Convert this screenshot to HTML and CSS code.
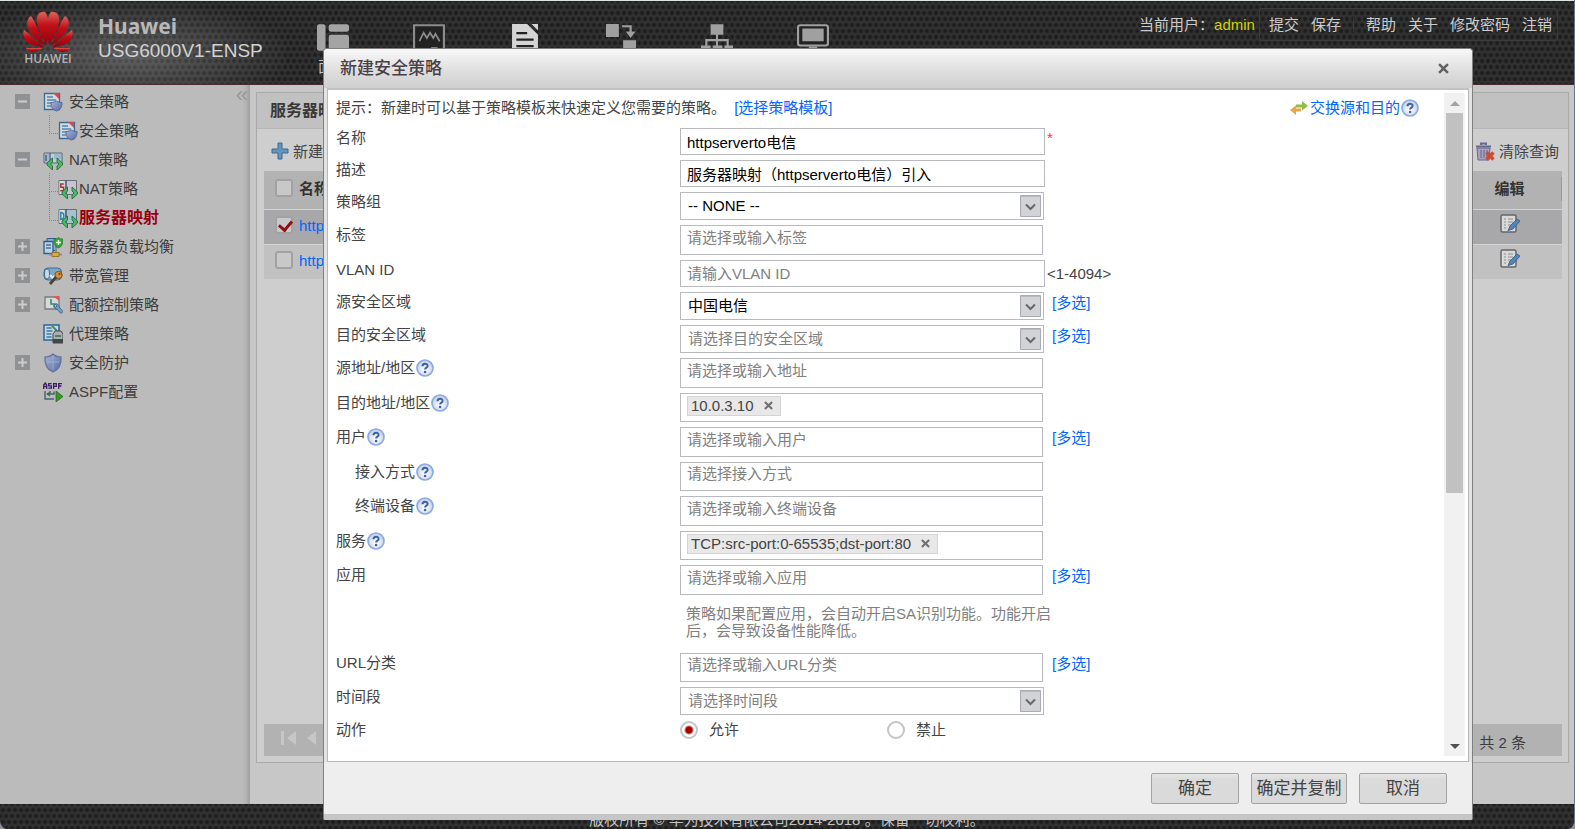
FILE: index.html
```html
<!DOCTYPE html>
<html lang="zh-CN">
<head>
<meta charset="utf-8">
<title>Huawei USG6000V1-ENSP</title>
<link rel="stylesheet" href="styles.css">
</head>
<body>
<svg class="defs" aria-hidden="true">
  <defs>
    <linearGradient id="petal" x1="0" y1="0" x2="0" y2="1"><stop offset="0" stop-color="#d9655c"/><stop offset=".4" stop-color="#c01018"/><stop offset="1" stop-color="#96000c"/></linearGradient>
    <radialGradient id="ball" cx=".5" cy=".6" r=".6"><stop offset="0" stop-color="#ffffff"/><stop offset="1" stop-color="#c3cde0"/></radialGradient>
    <linearGradient id="shieldfill" x1="0" y1="0" x2="1" y2="1"><stop offset="0" stop-color="#a9b6d6"/><stop offset="1" stop-color="#5669a6"/></linearGradient>
    <g id="petals"><path d="M26 34C24 22 23 6 28 1c6-1 9 4 8 10-1 8-6 17-10 23"/><path d="M28 35C33 25 37 11 42 5c4 2 5 8 2 14-3 6-10 12-16 16"/><path d="M29 36c7-5 15-14 20-17 2 6-1 12-6 14-5 2-9 3-14 3"/><path d="M30 37h17c-2 4-8 5-11 3z"/></g>
    <symbol id="i-help" viewBox="0 0 18 18"><circle cx="9" cy="9" r="8" fill="url(#ball)" stroke="#8aaae4" stroke-width="1.7"/><path d="M6.500 7.200C6.500 4 11.600 4 11.600 6.900c0 1.800-2.500 1.700-2.500 3.700" fill="none" stroke="#3a62a8" stroke-width="2"/><circle cx="9.100" cy="13" r="1.300" fill="#3a62a8"/></symbol>
    <symbol id="i-plus" viewBox="0 0 15 15"><path d="M0 0h15v15H0z" fill="#8f9193"/><path d="M3 7.500h9M7.500 3v9" stroke="#ccc" stroke-width="2"/></symbol>
    <symbol id="i-minus" viewBox="0 0 15 15"><path d="M0 0h15v15H0z" fill="#8f9193"/><path d="M3 7.500h9" stroke="#ccc" stroke-width="2"/></symbol>
    <symbol id="i-policy" viewBox="0 0 20 20"><path d="M1.500 1.500h15v16h-15z" fill="#d3d9de" stroke="#3f6c92" stroke-width="1.300"/><path d="M4 5h6M4 8h9M4 11h4M4 14h4" stroke="#4e86b4" stroke-width="1.300"/><path d="M10 1h6v6z" fill="#d8474c"/><path d="M8 10.500c2 0 4-.5 5.500-1.500 1.500 1 3.500 1.500 5.500 1.500 0 4-1 7-5.500 8.500C9 17.500 8 14.500 8 10.500z" fill="url(#shieldfill)" stroke="#56679b"/></symbol>
    <symbol id="i-arrows" viewBox="0 0 20 20"><path d="M9.500 8v4l-2 2 2 2v4L4 15v-2zM14 8l5.500 5v2L14 20v-4l2-2-2-2z" fill="#4fb568" stroke="#1d7039" stroke-width=".9"/></symbol>
    <symbol id="i-nat" viewBox="0 0 20 20"><path d="M1 3h18v10H1z" fill="#c4ccd2" stroke="#5b6671"/><path d="M2 4h4v8H2zM11 4h7v5h-7z" fill="#9db8cb"/><path d="M3 5v6M7 3v10" stroke="#315c7e" stroke-width="1.200"/><use href="#i-arrows"/></symbol>
    <symbol id="i-snat" viewBox="0 0 20 20"><path d="M1 1.500h17.500v14H1z" fill="#c9c3d0" stroke="#67707a"/><path d="M1.500 2h5v13h-5z" fill="#ddd"/><path d="M8 1v15" stroke="#455a6b" stroke-width="1.500"/><path d="M5.800 5H2.800v3.300h2.800v3.500H2.300" fill="none" stroke="#9e3530" stroke-width="1.400"/><use href="#i-arrows"/></symbol>
    <symbol id="i-dnat" viewBox="0 0 20 20"><path d="M1 1.500h17.500v14H1z" fill="#a9c0cf" stroke="#67707a"/><path d="M1.500 2h5v13h-5z" fill="#ddd"/><path d="M8 1v15" stroke="#455a6b" stroke-width="1.500"/><path d="M2.800 4.500v7c4 0 4-7 0-7z" fill="none" stroke="#2b81ad" stroke-width="1.400"/><use href="#i-arrows"/></symbol>
    <symbol id="i-balance" viewBox="0 0 20 20"><path d="M4 1.500h9v12H4z" fill="#8fb0cf" stroke="#2d5c8b"/><path d="M1 4.500h9v12H1z" fill="#c0d2e2" stroke="#2d5c8b" stroke-width="1.300"/><path d="M3 8h5M3 11h5" stroke="#3d74a5" stroke-width="1.300"/><path d="M11 2c2 0 3-.4 4.500-1.500C17 1.600 18 2 20 2c0 5-1 7.500-4.500 9C12 9.500 11 7 11 2z" fill="#35a535" stroke="#1a701a" stroke-width=".6"/><path d="M15.500 3v5M13 5.500h5" stroke="#e6f5e0" stroke-width="1.500"/><path d="M13 11v6M6 17.500h13" stroke="#8b8d90" stroke-width="2"/><path d="M9 15.500h7v4H9z" fill="#d7ab43" stroke="#8b671c" stroke-width=".8"/></symbol>
    <symbol id="i-band" viewBox="0 0 20 20"><rect x="1" y="2" width="17.500" height="12" rx="4" fill="#7ba6c6" stroke="#406b91"/><ellipse cx="4" cy="8" rx="2.500" ry="5" fill="#c8dce8" stroke="#406b91"/><path d="M7 9l3 3 5-7" fill="none" stroke="#e5f2f5" stroke-width="2"/><circle cx="15.500" cy="9" r="3.700" fill="#d0923c" stroke="#7b4c19"/><path d="M13 11l-6 7" stroke="#494137" stroke-width="2.800"/><circle cx="16.500" cy="8" r="1" fill="#6c4113"/></symbol>
    <symbol id="i-quota" viewBox="0 0 20 20"><path d="M2 2h14v12H2z" fill="#d6dad9" stroke="#747d7e" stroke-width="1.300"/><path d="M8 4v5h4" stroke="#34906b" stroke-width="1.600" fill="none"/><path d="M10 1h6v5z" fill="#d45d5c"/><path d="M11 9.500c-1 3 1 4.500 3 4.500l4 4.500 2-2-4-4.500c0-2-2-4-4-3l2 2-1.500 1.500z" fill="#75a3c7" stroke="#395f84" stroke-width=".9"/></symbol>
    <symbol id="i-proxy" viewBox="0 0 20 20"><path d="M1 1h15v15H1z" fill="#c8d6df" stroke="#2b679a" stroke-width="1.500"/><path d="M3.500 4h5M3.500 7h6M3.500 10h5M3.500 13h5" stroke="#3a79ac" stroke-width="1.400"/><path d="M9 2l5 5" stroke="#429353" stroke-width="2"/><path d="M10 10l2-3h6l2 3v9H10z" fill="#abb0b1" stroke="#424747"/><path d="M10 15h10v4H10z" fill="#424747"/><path d="M12 12h6" stroke="#356f4a" stroke-width="1.500"/></symbol>
    <symbol id="i-shield" viewBox="0 0 20 20"><path d="M2 4c3 0 6-1 8-3 2 2 5 3 8 3 .5 7-1 12-8 15C3 16 1.500 11 2 4z" fill="url(#shieldfill)" stroke="#64749f" stroke-width="1.300"/><path d="M10 3v14M4 9h12" stroke="#b3c0dd" opacity=".6"/></symbol>
    <symbol id="i-aspf" viewBox="0 0 20 20"><path d="M.7 7V3l1.500-2 1.500 2v4M.7 4.500h3M8.500 1.600H5.700v2.200h2.600v2.400H5.300M10.600 7V1.600h2.700v2.700h-2.700M15.700 7V1.600H19M15.700 4h2.700" fill="none" stroke="#3b1d68" stroke-width="1.300"/><path d="M2 9v8h9M4 12h7V9.500M7 9v3" fill="none" stroke="#48636d" stroke-width="1.400"/><path d="M3 12l4-2.500v5z" fill="#267f45"/><path d="M13 9v11l7-5.500z" fill="#379824" stroke="#1a6413" stroke-width=".7"/></symbol>
    <symbol id="i-edit" viewBox="0 0 20 20"><rect x="1" y="1" width="15" height="17" rx="1.500" fill="#d8d9d8" stroke="#62666b" stroke-width="1.500"/><path d="M4 5h2M8 5h5M4 8h2M8 8h5M4 11h2M8 11h3M4 14h2" stroke="#8d8f91" stroke-width="1.200"/><path d="M17 5l3 2-7 8-5 1.500 2-4.500z" fill="#4f88b8" stroke="#315b80" stroke-width=".8"/></symbol>
    <symbol id="i-down" viewBox="0 0 21 22"><path d="M.5.5h20v21H.5z" fill="#d2d3d6" stroke="#a9abb2"/><path d="M1 1.500h19" stroke="#b9bbc0"/><path d="M6 9.500l4.500 4.500L15 9.500" fill="none" stroke="#66686c" stroke-width="2"/></symbol>
    <symbol id="i-x" viewBox="0 0 10 10"><path d="M1 1l8 8M9 1L1 9" stroke="currentColor" stroke-width="2.300"/></symbol>
  </defs>
</svg>
<div class="page">
  <header class="top">
    <div class="brand">
      <div class="logo">
        <svg width="50" height="41" viewBox="0 0 50 41" aria-hidden="true"><g fill="url(#petal)"><use href="#petals"/><use href="#petals" transform="translate(50 0) scale(-1 1)"/></g></svg>
        <span class="logo-name">HUAWEI</span>
      </div>
      <div class="product"><strong>Huawei</strong><span>USG6000V1-ENSP</span></div>
    </div>
    <nav class="modules" aria-label="模块">
      <a href="#"><svg width="32" height="27" viewBox="0 0 30 25" fill="#a4a4a4" aria-hidden="true"><rect width="8" height="25" rx="2"/><rect x="11" width="19" height="7" rx="2"/><rect x="11" y="10" width="19" height="15" rx="2"/></svg><span>面板</span></a>
      <a href="#" aria-label="监控"><svg width="32" height="27" viewBox="0 0 30 25" fill="none" stroke="#8c8c8c" aria-hidden="true"><path d="M1 26V1h28v25" fill="#222" stroke-width="2"/><path d="M6 16l4-8 3 5 3-5 3 5 2-4 4 7" stroke-width="1.600"/><path d="M17 23h6" stroke-width="3"/></svg></a>
      <a href="#" aria-label="策略"><svg width="26" height="27" viewBox="0 0 24 25" fill="#d4d4d4" aria-hidden="true"><path d="M0 0h14l10 10v15H0zM18 0h6v6z"/><path d="M4 8.500h10M4 14.500h16M4 20.500h16" stroke="#222" stroke-width="2"/></svg></a>
      <a href="#" aria-label="对象"><svg width="30" height="27" viewBox="0 0 28 25" fill="#a0a0a0" aria-hidden="true"><path d="M0 0h12v12H0zM16 15h12v10H16z"/><path d="M15 2h8v8" fill="none" stroke="#a0a0a0" stroke-width="2"/><path d="M18.500 7h9L23 13z"/></svg></a>
      <a href="#" aria-label="网络"><svg width="32" height="27" viewBox="0 0 30 25" fill="#a0a0a0" aria-hidden="true"><path d="M9 0h12v10H9zM0 20h9v5H0zM11 20h9v5h-9zM22 20h8v5h-8z"/><path d="M15 9v12M5 21v-6h20v6" fill="none" stroke="#a0a0a0" stroke-width="2"/></svg></a>
      <a href="#" aria-label="系统"><svg width="32" height="27" viewBox="0 0 30 25" fill="#a0a0a0" aria-hidden="true"><rect x="1" y="1" width="28" height="19" rx="2" fill="#222" stroke="#a0a0a0" stroke-width="2"/><path d="M5 4h20v12H5zM11 21h8v4h-8z"/></svg></a>
    </nav>
    <div class="account">
      <span>当前用户：</span><span class="user">admin</span>
      <div class="links"><a href="#">提交</a><a href="#">保存</a><i></i><a href="#">帮助</a><a href="#">关于</a><a href="#">修改密码</a><a href="#">注销</a></div>
    </div>
  </header>

  <div class="body">
    <aside class="side">
      <span class="collapse">«</span>
      <ul class="tree">
        <li><button class="toggle" aria-label="收起"><svg><use href="#i-minus"/></svg></button><a href="#"><svg class="ico"><use href="#i-policy"/></svg>安全策略</a></li>
        <li class="child last"><a href="#"><svg class="ico"><use href="#i-policy"/></svg>安全策略</a></li>
        <li><button class="toggle" aria-label="收起"><svg><use href="#i-minus"/></svg></button><a href="#"><svg class="ico"><use href="#i-nat"/></svg>NAT策略</a></li>
        <li class="child"><a href="#"><svg class="ico"><use href="#i-snat"/></svg>NAT策略</a></li>
        <li class="child last current"><a href="#"><svg class="ico"><use href="#i-dnat"/></svg>服务器映射</a></li>
        <li><button class="toggle" aria-label="展开"><svg><use href="#i-plus"/></svg></button><a href="#"><svg class="ico"><use href="#i-balance"/></svg>服务器负载均衡</a></li>
        <li><button class="toggle" aria-label="展开"><svg><use href="#i-plus"/></svg></button><a href="#"><svg class="ico"><use href="#i-band"/></svg>带宽管理</a></li>
        <li><button class="toggle" aria-label="展开"><svg><use href="#i-plus"/></svg></button><a href="#"><svg class="ico"><use href="#i-quota"/></svg>配额控制策略</a></li>
        <li><span class="toggle"></span><a href="#"><svg class="ico"><use href="#i-proxy"/></svg>代理策略</a></li>
        <li><button class="toggle" aria-label="展开"><svg><use href="#i-plus"/></svg></button><a href="#"><svg class="ico"><use href="#i-shield"/></svg>安全防护</a></li>
        <li><span class="toggle"></span><a href="#"><svg class="ico"><use href="#i-aspf"/></svg>ASPF配置</a></li>
      </ul>
    </aside>
    <main class="main">
      <section class="panel">
        <h1>服务器映射</h1>
        <div class="tools">
          <button><svg width="18" height="18" viewBox="0 0 18 18" aria-hidden="true"><path d="M7 1h4v6h6v4h-6v6H7v-6H1V7h6z" fill="#6294bd" stroke="#41688f"/></svg>新建</button>
          <button class="clear"><svg width="20" height="19" viewBox="0 0 20 19" aria-hidden="true"><path d="M2 6h13l-1 12H3z" fill="#a6a3bf" stroke="#6a6790"/><path d="M1 4.500h15M6 3V1.500h5V3" fill="none" stroke="#6a6790" stroke-width="2"/><path d="M6 8v8M9 8v8M12 8v8" stroke="#686491"/><path d="M11.500 10.500l7 7M18.500 10.500l-7 7" stroke="#cf4a33" stroke-width="3.500"/></svg>清除查询</button>
        </div>
        <table class="list">
          <thead><tr><th class="c-check"><input type="checkbox" aria-label="全选"></th><th>名称</th><th class="c-edit"><span>编辑</span></th></tr></thead>
          <tbody>
            <tr class="picked"><td class="c-check"><input type="checkbox" checked aria-label="选择第一行"></td><td><a href="#">httpserverto</a></td><td class="c-edit"><button aria-label="编辑"><svg class="ico"><use href="#i-edit"/></svg></button></td></tr>
            <tr><td class="c-check"><input type="checkbox" aria-label="选择第二行"></td><td><a href="#">httpserverto</a></td><td class="c-edit"><button aria-label="编辑"><svg class="ico"><use href="#i-edit"/></svg></button></td></tr>
          </tbody>
        </table>
        <div class="pager">
          <button aria-label="首页"><svg width="16" height="14" viewBox="0 0 16 14" fill="#c6c6c6" aria-hidden="true"><path d="M0 0h3v14H0zM15 0v14L6 7z"/></svg></button>
          <button aria-label="上一页"><svg width="10" height="14" viewBox="0 0 10 14" fill="#c6c6c6" aria-hidden="true"><path d="M9 0v14L0 7z"/></svg></button>
          <span class="count">共 2 条</span>
        </div>
      </section>
    </main>
  </div>
  <footer class="foot">版权所有 © 华为技术有限公司2014-2018 。保留一切权利。</footer>
</div>

<div class="dialog" role="dialog" aria-labelledby="dlg-title">
  <div class="dlg-head"><h2 id="dlg-title">新建安全策略</h2><button aria-label="关闭"><svg width="11" height="11"><use href="#i-x"/></svg></button></div>
  <div class="dlg-body">
    <form class="form" id="policy">
      <div class="tip"><p>提示：新建时可以基于策略模板来快速定义您需要的策略。 <a href="#">[选择策略模板]</a></p>
        <div class="swap"><svg width="18" height="15" viewBox="0 0 18 15" aria-hidden="true"><path d="M6 4.500h6V1l6 5-6 4.500V7.500H6z" fill="#8fbd4a"/><path d="M11 8.500H6V5.500L0 10l6 5v-3.500h5z" fill="#eba345"/></svg><a href="#">交换源和目的</a><svg class="help"><use href="#i-help"/></svg></div></div>
      <div class="row"><label for="f1">名称</label><div class="cell"><input id="f1" class="text" value="httpserverto电信"><span class="must">*</span></div></div>
      <div class="row"><label for="f2">描述</label><div class="cell"><input id="f2" class="text" value="服务器映射（httpserverto电信）引入"></div></div>
      <div class="row"><label for="f3">策略组</label><div class="cell"><div class="drop"><select id="f3"><option>-- NONE --</option></select><svg><use href="#i-down"/></svg></div></div></div>
      <div class="row"><label for="f4">标签</label><div class="cell"><input id="f4" class="pick" placeholder="请选择或输入标签"></div></div>
      <div class="row"><label for="f5">VLAN ID</label><div class="cell"><input id="f5" class="text" placeholder="请输入VLAN ID"><span class="range">&lt;1-4094&gt;</span></div></div>
      <div class="row"><label for="f6">源安全区域</label><div class="cell"><div class="drop"><select id="f6"><option>中国电信</option></select><svg><use href="#i-down"/></svg></div><a href="#">[多选]</a></div></div>
      <div class="row"><label for="f7">目的安全区域</label><div class="cell"><div class="drop empty"><select id="f7"><option>请选择目的安全区域</option></select><svg><use href="#i-down"/></svg></div><a href="#">[多选]</a></div></div>
      <div class="row"><label for="f8">源地址/地区<svg class="help"><use href="#i-help"/></svg></label><div class="cell"><input id="f8" class="pick" placeholder="请选择或输入地址"></div></div>
      <div class="row"><label for="f9">目的地址/地区<svg class="help"><use href="#i-help"/></svg></label><div class="cell"><div class="chips"><span class="chip">10.0.3.10<button type="button" aria-label="移除"><svg width="9" height="9"><use href="#i-x"/></svg></button></span><input id="f9"></div></div></div>
      <div class="row"><label for="f10">用户<svg class="help"><use href="#i-help"/></svg></label><div class="cell"><input id="f10" class="pick" placeholder="请选择或输入用户"><a href="#">[多选]</a></div></div>
      <div class="row sub"><label for="f11">接入方式<svg class="help"><use href="#i-help"/></svg></label><div class="cell"><input id="f11" class="pick short" placeholder="请选择接入方式"></div></div>
      <div class="row sub"><label for="f12">终端设备<svg class="help"><use href="#i-help"/></svg></label><div class="cell"><input id="f12" class="pick" placeholder="请选择或输入终端设备"></div></div>
      <div class="row"><label for="f13">服务<svg class="help"><use href="#i-help"/></svg></label><div class="cell"><div class="chips"><span class="chip">TCP:src-port:0-65535;dst-port:80<button type="button" aria-label="移除"><svg width="9" height="9"><use href="#i-x"/></svg></button></span><input id="f13"></div></div></div>
      <div class="row"><label for="f14">应用</label><div class="cell"><input id="f14" class="pick" placeholder="请选择或输入应用"><a href="#">[多选]</a></div></div>
      <div class="row"><span></span><p class="note">策略如果配置应用，会自动开启SA识别功能。功能开启后，会导致设备性能降低。</p></div>
      <div class="row"><label for="f15">URL分类</label><div class="cell"><input id="f15" class="pick short" placeholder="请选择或输入URL分类"><a href="#">[多选]</a></div></div>
      <div class="row"><label for="f16">时间段</label><div class="cell"><div class="drop empty"><select id="f16"><option>请选择时间段</option></select><svg><use href="#i-down"/></svg></div></div></div>
      <div class="row" role="radiogroup" aria-label="动作"><span>动作</span><div class="cell radios"><label><input type="radio" name="act" checked>允许</label><label><input type="radio" name="act">禁止</label></div></div>
    </form>
    <div class="scroll" aria-hidden="true"><i class="up"></i><div class="track"><div class="thumb"></div></div><i class="down"></i></div>
  </div>
  <div class="dlg-foot"><button class="btn">确定</button><button class="btn wide">确定并复制</button><button class="btn">取消</button></div>
</div>
</body>
</html>
```

FILE: styles.css
```css
* { box-sizing: border-box; margin: 0; padding: 0; }
html { background: #8f9298; }
body {
  font: 15px/19px "Liberation Sans", "Noto Sans CJK SC", sans-serif;
  color: #444;
  overflow: hidden;
}
a { color: #0066ff; text-decoration: none; }
button { font: inherit; color: inherit; background: none; border: 0; }
input, select { font: inherit; outline: 0; }
svg { flex: none; display: block; }
.defs { position: absolute; width: 0; height: 0; }
.ico { width: 20px; height: 20px; }
.help { width: 18px; height: 18px; margin-left: 1px; }

.page { display: flex; flex-direction: column; height: 100vh; border-right: 1px solid #68748f; border-radius: 0 0 8px 8px; overflow: hidden; }

/* header */
.top, .foot {
  background-color: #323232;
  background-image: radial-gradient(circle, #1c1c1c 1px, transparent 3px), radial-gradient(circle, #1c1c1c 1px, transparent 3px);
  background-size: 6px 12px;
  background-position: 0 0, 3px 6px;
}
.top { flex: none; display: flex; height: 85px; border-top: 1px solid #dfe6df; border-bottom: 1px solid #4b2a2d; }
.brand {
  flex: none; display: flex; gap: 25px; width: 285px; padding: 10px 0 0 23px;
  background: radial-gradient(ellipse at 45% 65%, rgba(255,255,255,.24), transparent 75%);
}
.logo { width: 50px; }
.logo-name { display: block; font: 600 12px/13px "Open Sans", sans-serif; color: #b4b4b4; text-align: center; }
.product { display: flex; flex-direction: column; padding-top: 2px; }
.product strong { font: bold 21px/26px "Noto Sans", sans-serif; color: #b8b8b8; }
.product span { font-size: 19px; line-height: 24px; color: #d2d2d2; }
.modules { display: flex; flex: none; }
.modules a { display: flex; flex-direction: column; align-items: center; gap: 6px; width: 96px; padding-top: 23px; color: #c4c4c4; }
.account { display: flex; height: 33px; margin: 7px 16px 0 auto; align-items: center; color: #ccc; white-space: nowrap; }
.user { color: #d2d200; padding-right: 4px; }
.links { display: flex; align-items: center; gap: 12px; height: 33px; padding: 0 5px 0 9px; border: 1px solid #3c3c3c; border-radius: 3px; }
.links a { color: #ccc; }
.links i { width: 1px; height: 14px; background: #3a3a3a; }

/* body */
.body { flex: 1; display: flex; min-height: 0; }
.side { position: relative; flex: none; width: 250px; padding-top: 2px; background: linear-gradient(90deg, #bbb 242px, #b1b1b1 247px, #a4a4a4 248px); }
.collapse { position: absolute; right: 2px; top: 0; font-size: 22px; color: #999; }
.tree { list-style: none; }
.tree li { display: flex; align-items: center; height: 29px; padding-left: 15px; }
.tree a { display: flex; align-items: center; gap: 6px; color: #3d3d3d; }
.toggle { width: 15px; height: 15px; margin-right: 13px; }
.toggle svg { width: 15px; height: 15px; }
.tree .child { position: relative; padding-left: 58px; }
.tree .child a { gap: 1px; }
.child::before { content: ""; position: absolute; left: 49px; top: -1px; width: 8px; height: 18px; border: 1px dotted #858585; border-width: 0 0 1px 1px; }
.child:not(.last)::after { content: ""; position: absolute; left: 49px; top: 17px; height: 12px; border-left: 1px dotted #858585; }
.tree .current a { color: #99000f; font-size: 16px; font-weight: bold; }

.main { flex: 1; min-width: 0; display: flex; padding: 7px 5px 41px 6px; background: #c7c7c7; }
.panel { flex: 1; display: flex; flex-direction: column; border: 1px solid #a9a9a9; background: #cecece; }
.panel h1 { padding-left: 13px; font-size: 16px; line-height: 35px; color: #383838; background: #c1c1c1; border-bottom: 1px solid #b8b8b8; }
.tools { display: flex; justify-content: space-between; align-items: center; height: 42px; padding: 2px 9px 0 14px; }
.tools button { display: flex; align-items: center; gap: 4px; }
.list { margin: 0 6px 0 7px; border-collapse: collapse; table-layout: fixed; background: #c1c1c1; }
.list th { height: 38px; padding-bottom: 2px; text-align: left; color: #333; background: #b2b2b2; }
.list td { height: 35px; padding-bottom: 2px; border-top: 1px solid #d4d4d4; }
.picked { background: #a8a8ab; }
.list .c-check { width: 35px; padding: 0 0 4px 11px; }
.list .c-edit { width: 104px; text-align: center; }
th.c-edit span { display: block; line-height: 24px; border-right: 1px solid #999; }
.c-edit svg { margin: auto; }
.list input { display: block; appearance: none; width: 18px; height: 18px; border: 2px solid #a2a2a2; border-radius: 3px; background: #c8c8c8; }
.list input:checked { position: relative; }
.list input:checked::after { content: ""; position: absolute; left: 4px; top: 0; width: 6px; height: 10px; border: solid #900f14; border-width: 0 3px 3px 0; transform: rotate(40deg); }
.pager { display: flex; align-items: center; gap: 10px; height: 32px; margin: auto 6px 6px 7px; padding: 0 36px 0 17px; background: #b2b2b2; }
.pager button { padding-bottom: 4px; }
.count { margin-left: auto; padding-top: 4px; color: #3d3d3d; }
.foot { flex: none; height: 25px; padding-top: 6px; line-height: 20px; text-align: center; color: #c4c4c4; }

/* dialog */
.dialog {
  position: fixed; inset: 48px 102px 9px 323px;
  display: flex; flex-direction: column;
  background: #e3e3e3; border: 1px solid #808080; border-bottom: 0; border-radius: 4px 4px 2px 2px;
  box-shadow: inset 0 1px #fff;
}
.dlg-head { flex: none; display: flex; justify-content: space-between; align-items: center; height: 39px; padding: 0 23px 0 16px; background: linear-gradient(#f8f8f8, #ddd 60%, #cfcfcf); border-radius: 4px 4px 0 0; }
.dlg-head h2 { font-size: 17px; font-weight: 500; color: #4a4048; }
.dlg-head button { color: #606060; }
.dlg-body { flex: 1; min-height: 0; display: flex; margin: 0 3px; padding: 3px 3px 5px 8px; background: #fff; border: 1px solid #b8b8b8; border-top: 2px solid #c2c2c2; }
.form { flex: 1; display: flex; flex-direction: column; gap: 5px; overflow: hidden; }
.tip { display: flex; justify-content: space-between; height: 30px; padding-top: 5px; }
.tip a { margin-left: 4px; }
.swap { display: flex; height: 19px; align-items: center; margin-right: 25px; }
.swap a { margin-left: 2px; }
.row { display: grid; grid-template-columns: 344px 1fr; align-items: start; }
.row > label { display: flex; align-items: center; height: 19px; }
.sub > label { padding-left: 19px; }
.cell { display: flex; align-items: flex-start; }
.cell > a { padding: 1px 0 0 8px; }
.pick + a { padding-left: 9px; }
.text, .pick, .chips, .drop { border: 1px solid #b9bac0; background: #fff; }
.text { width: 365px; height: 27px; padding: 0 6px; color: #000; }
.pick { width: 363px; height: 30px; padding: 0 6px 6px; }
.short { height: 29px; }
::placeholder { color: #808080; opacity: 1; }
.drop { position: relative; width: 364px; height: 28px; }
.drop select { display: block; appearance: none; width: 100%; height: 26px; padding: 0 30px 2px 7px; border: 0; background: none; color: #000; }
.drop.empty select { color: #808080; }
.drop svg { position: absolute; right: 2px; top: 2px; width: 21px; height: 22px; pointer-events: none; }
.chips { display: flex; width: 363px; height: 29px; padding: 2px 6px; }
.chips input { flex: 1; min-width: 0; height: 20px; border: 0; }
.chip { display: flex; align-items: center; gap: 10px; height: 20px; padding: 0 7px 1px 3px; background: #e8e8e8; border: 1px solid #d4d4d4; white-space: nowrap; }
.chip button { color: #707070; }
.must { padding-left: 2px; color: #f33; }
.range { padding: 4px 0 0 2px; }
.note { width: 380px; height: 48px; padding: 5px 0 0 6px; line-height: 17px; color: #808080; }
.radios label { display: flex; align-items: center; gap: 11px; width: 207px; height: 19px; }
.radios input { appearance: none; width: 18px; height: 18px; border: 2px solid #c4c4c4; border-radius: 50%; }
.radios input:checked { background: radial-gradient(circle, #a00 3px, transparent 5px); }

.scroll { flex: none; display: flex; flex-direction: column; width: 21px; background: #f1f1f1; }
.scroll i { height: 20px; }
.scroll i::before { content: ""; display: block; width: 0; margin: 8px auto 0; border: 5px solid transparent; border-top: 0; border-bottom-color: #a3a3a3; }
.scroll .down::before { border: 5px solid transparent; border-bottom: 0; border-top-color: #505050; }
.track { flex: 1; padding: 0 2px; }
.thumb { height: 61%; background: #c1c1c1; }

.dlg-foot { flex: none; display: flex; justify-content: flex-end; gap: 12px; height: 58px; padding: 11px 25px 0; background: #eee; border-bottom: 6px solid #c6c6c6; border-radius: 0 0 2px 2px; }
.btn { width: 88px; height: 31px; font-size: 17px; color: #444; background: linear-gradient(#e6e6e6, #dadada 20%); border: 1px solid #a3a3a8; border-radius: 2px; }
.btn.wide { width: 96px; }
```
